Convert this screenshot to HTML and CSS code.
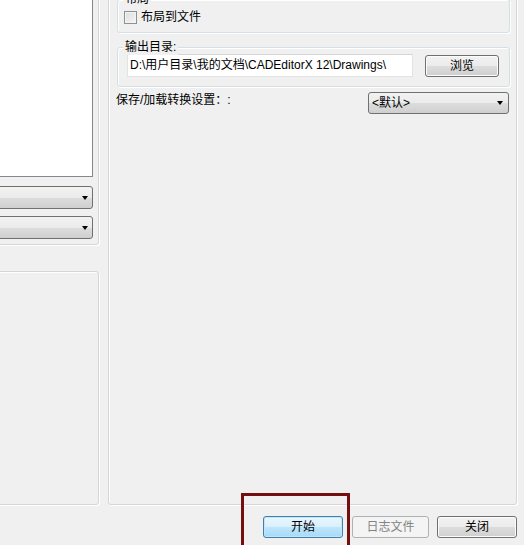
FILE: index.html
```html
<!DOCTYPE html>
<html lang="zh-CN">
<head>
<meta charset="utf-8">
<title>转换</title>
<link rel="stylesheet" href="styles.css">
</head>
<body>
<div class="window">
  <div class="main">
    <div class="left">
      <div class="lgroup lgroup-top">
        <div class="listbox"></div>
        <div class="combo combo-first"><span class="arrow"></span></div>
        <div class="combo combo-second"><span class="arrow"></span></div>
      </div>
      <div class="lgroup lgroup-bottom"></div>
    </div>
    <div class="panel">
      <div class="group group-layout">
        <span class="legend">布局</span>
        <label class="check"><span class="box"></span><span>布局到文件</span></label>
      </div>
      <div class="group group-output">
        <span class="legend">输出目录:</span>
        <div class="out-row">
          <div class="input">D:\用户目录\我的文档\CADEditorX 12\Drawings\</div>
          <button class="btn btn-browse">浏览</button>
        </div>
      </div>
      <div class="save-row">
        <span class="save-label">保存/加载转换设置：:</span>
        <div class="select"><span>&lt;默认&gt;</span><span class="arrow"></span></div>
      </div>
    </div>
  </div>
  <div class="footer">
    <button class="btn btn-default">开始</button>
    <button class="btn btn-disabled">日志文件</button>
    <button class="btn">关闭</button>
  </div>
</div>
<div class="highlight"></div>
</body>
</html>
```
FILE: styles.css
```css
* { box-sizing: border-box; }
html, body { margin: 0; padding: 0; }
body {
  background: #f0f0f0;
  font-family: "Liberation Sans", "Noto Sans CJK SC", sans-serif;
  font-size: 12px;
  color: #000;
  width: 524px;
  height: 545px;
  overflow: hidden;
  position: relative;
}
.window { margin-top: -41px; }
.main { display: flex; align-items: flex-start; }

/* left column (partially off-screen) */
.left { width: 219px; margin-left: -120px; display: flex; flex-direction: column; }
.lgroup {
  border: 1px solid #d5d5d5;
  box-shadow: inset 1px 1px 0 #fff, 1px 1px 0 #fff;
  border-radius: 3px;
}
.lgroup-top { padding: 10px 5px 5px 8px; }
.listbox {
  height: 207px;
  background: #fff;
  border: 1px solid #828790;
}
.combo {
  height: 23px;
  border: 1px solid #707070;
  border-radius: 3px;
  background: linear-gradient(#f2f2f2 0%, #ebebeb 50%, #dddddd 50%, #cfcfcf 100%);
  display: flex;
  align-items: center;
  justify-content: flex-end;
  padding-right: 4px;
}
.combo-first { margin-top: 9px; }
.combo-second { margin-top: 7px; }
.arrow {
  width: 0; height: 0;
  border-left: 3.5px solid transparent;
  border-right: 3.5px solid transparent;
  border-top: 4px solid #000;
}
.lgroup-bottom { margin-top: 26px; height: 234px; }

/* right panel */
.panel {
  margin-left: 9px;
  width: 409px;
  height: 546px;
  border: 1px solid #d5d5d5;
  box-shadow: inset 1px 1px 0 #fff, 1px 1px 0 #fff;
  border-radius: 3px;
  padding: 39px 6px 0 8px;
}
.group {
  position: relative;
  border: 1px solid #d5dfe5;
  box-shadow: inset 1px 1px 0 #fff, 1px 1px 0 #fff;
  border-radius: 3px;
}
.legend {
  position: absolute;
  left: 5px;
  top: -9px;
  line-height: 16px;
  padding: 0 2px;
  background: #f0f0f0;
}
.group-layout { height: 34px; padding: 11px 6px 0 6px; }
.check { display: flex; align-items: center; gap: 4px; line-height: 13px; }
.box {
  width: 13px; height: 13px;
  border: 1px solid #8e8f8f;
  background: linear-gradient(135deg, #dcdcdc, #f6f6f6);
  box-shadow: inset 0 0 0 1px #f4f4f4;
}
.group-output { margin-top: 14px; height: 40px; padding: 6px 0 0 9px; }
.out-row { display: flex; align-items: flex-start; }
.input {
  width: 286px;
  height: 23px;
  background: #fff;
  border: 1px solid #e3e3e3;
  border-top-color: #d6d6d6;
  padding: 0 0 0 2px;
  line-height: 21px;
  white-space: nowrap;
  overflow: hidden;
}
.btn {
  font-family: inherit;
  font-size: 12px;
  color: #000;
  height: 22px;
  width: 80px;
  padding: 0;
  border: 1px solid #707070;
  border-radius: 3px;
  background: linear-gradient(#f2f2f2 0%, #ebebeb 50%, #dddddd 50%, #cfcfcf 100%);
  box-shadow: inset 0 0 0 1px #fcfcfc;
  line-height: 20px;
}
.btn-browse { width: 74px; margin: 1px 0 0 12px; }
.save-row {
  margin-top: 5px;
  display: flex;
  justify-content: space-between;
  align-items: flex-start;
  padding-right: 1px;
}
.save-label { line-height: 16px; margin-left: -1px; }
.select {
  width: 141px;
  height: 22px;
  border: 1px solid #707070;
  border-radius: 3px;
  background: linear-gradient(#f2f2f2 0%, #ebebeb 50%, #dddddd 50%, #cfcfcf 100%);
  display: flex;
  align-items: center;
  justify-content: space-between;
  padding: 0 5px 0 3px;
  line-height: 20px;
}

/* footer */
.footer {
  display: flex;
  justify-content: flex-end;
  padding: 11px 7px 0 0;
}
.footer .btn + .btn { margin-left: 9px; }
.footer .btn-disabled { width: 77px; }
.footer .btn-disabled + .btn { margin-left: 8px; }
.btn-default {
  border-color: #3c7fb1;
  background: linear-gradient(#eaf6fd 0%, #d9f0fc 50%, #bee6fd 50%, #a7d9f5 100%);
  box-shadow: inset 0 0 0 1px #c4e5f6;
}
.btn-disabled {
  color: #838383;
  border-color: #adb2b5;
  background: #f4f4f4;
  box-shadow: none;
}

/* annotation overlay */
.highlight {
  position: absolute;
  left: 241px;
  top: 493px;
  width: 109px;
  height: 70px;
  border: 3px solid #740f0f;
}
```
